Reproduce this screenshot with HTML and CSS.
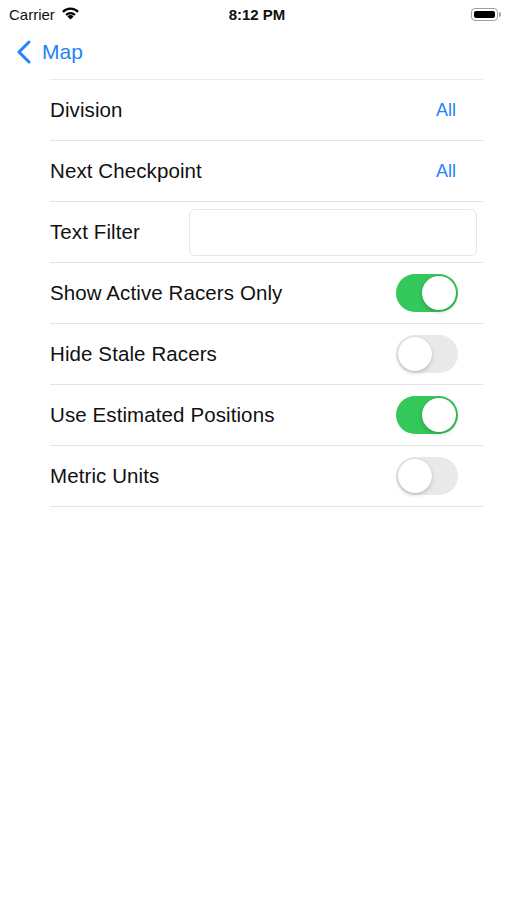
FILE: index.html
```html
<!DOCTYPE html>
<html lang="en">
<head>
    <meta charset="UTF-8">
    <meta name="viewport" content="width=device-width, initial-scale=1.0">
    <title>Map Settings</title>
    <link rel="stylesheet" href="styles.css">
</head>
<body>
    <div class="status-bar">
        <div class="carrier">
            Carrier
            <svg class="wifi" width="19" height="14" viewBox="0 0 19 14">
                <path d="M9.5 13.6 L6.4 10.4 A4.4 4.4 0 0 1 12.6 10.4 Z" fill="#000"/>
                <path d="M4.3 8.3 A7.3 7.3 0 0 1 14.7 8.3 L13.2 9.8 A5.2 5.2 0 0 0 5.8 9.8 Z" fill="#000"/>
                <path d="M1.1 5.1 A11.8 11.8 0 0 1 17.9 5.1 L16.3 6.7 A9.5 9.5 0 0 0 2.7 6.7 Z" fill="#000"/>
            </svg>
        </div>
        <div class="time">8:12 PM</div>
        <div class="battery">
            <div class="battery-body"><div class="battery-fill"></div></div>
            <div class="battery-cap"></div>
        </div>
    </div>

    <div class="nav-bar">
        <a class="back-button" href="#">
            <svg width="16" height="24" viewBox="0 0 16 24">
                <path d="M13 2 L3 12 L13 22" fill="none" stroke="#2385f5" stroke-width="3" stroke-linecap="round" stroke-linejoin="round"/>
            </svg>
            <span>Map</span>
        </a>
    </div>

    <div class="settings-list">
        <div class="row">
            <span class="label">Division</span>
            <span class="value">All</span>
        </div>
        <div class="row">
            <span class="label">Next Checkpoint</span>
            <span class="value">All</span>
        </div>
        <div class="row">
            <span class="label">Text Filter</span>
            <input class="text-filter" type="text">
        </div>
        <div class="row">
            <span class="label">Show Active Racers Only</span>
            <div class="toggle on"><div class="knob"></div></div>
        </div>
        <div class="row">
            <span class="label">Hide Stale Racers</span>
            <div class="toggle"><div class="knob"></div></div>
        </div>
        <div class="row">
            <span class="label">Use Estimated Positions</span>
            <div class="toggle on"><div class="knob"></div></div>
        </div>
        <div class="row">
            <span class="label">Metric Units</span>
            <div class="toggle"><div class="knob"></div></div>
        </div>
    </div>
</body>
</html>
```

FILE: styles.css
```css
body {
    margin: 0;
    background-color: #ffffff;
    color: #000000;
    font-family: "Liberation Sans", Arial, sans-serif;
    width: 507px;
    height: 900px;
}

.status-bar {
    height: 28px;
    display: flex;
    align-items: center;
    justify-content: space-between;
    padding: 0 6px 0 9px;
    font-size: 15px;
}
.carrier {
    display: flex;
    align-items: center;
    gap: 6px;
    width: 120px;
    color: #111;
}
.wifi {
    margin-top: -3px;
}
.time {
    font-weight: bold;
    color: #111;
    margin-left: 4px;
}
.battery {
    width: 120px;
    display: flex;
    justify-content: flex-end;
    align-items: center;
}
.battery-body {
    width: 27px;
    height: 13px;
    border: 1px solid #a0a0a0;
    border-radius: 4px;
    padding: 2px;
    box-sizing: border-box;
    display: flex;
}
.battery-fill {
    flex: 1;
    background-color: #000;
    border-radius: 2px;
}
.battery-cap {
    width: 2px;
    height: 5px;
    background-color: #a0a0a0;
    border-radius: 0 2px 2px 0;
    margin-left: 1px;
}

.nav-bar {
    height: 51px;
    display: flex;
    align-items: center;
    padding-left: 16px;
}
.back-button {
    display: flex;
    align-items: center;
    gap: 10px;
    color: #2385f5;
    text-decoration: none;
    font-size: 21px;
    margin-top: -3px;
}

.settings-list {
    margin-left: 50px;
    margin-right: 24px;
    border-top: 1px solid #ebebeb;
}
.row {
    height: 60px;
    border-bottom: 1px solid #e3e3e3;
    display: flex;
    align-items: center;
    justify-content: space-between;
}
.label {
    font-size: 20.5px;
    color: #111;
    letter-spacing: 0.1px;
}
.value {
    font-size: 18px;
    color: #2385f5;
    margin-right: 27px;
}
.text-filter {
    width: 288px;
    height: 47px;
    box-sizing: border-box;
    border: 1px solid #e6e6e6;
    border-radius: 6px;
    margin-right: 6px;
    outline: none;
}
.toggle {
    width: 62px;
    height: 38px;
    border-radius: 19px;
    background-color: #e9e9ea;
    margin-right: 25px;
    padding: 2px;
    box-sizing: border-box;
    display: flex;
}
.toggle.on {
    background-color: #34c759;
    justify-content: flex-end;
}
.knob {
    width: 34px;
    height: 34px;
    border-radius: 50%;
    background-color: #ffffff;
    box-shadow: 0 2px 4px rgba(0, 0, 0, 0.18), 0 0 1px rgba(0, 0, 0, 0.12);
}
```
